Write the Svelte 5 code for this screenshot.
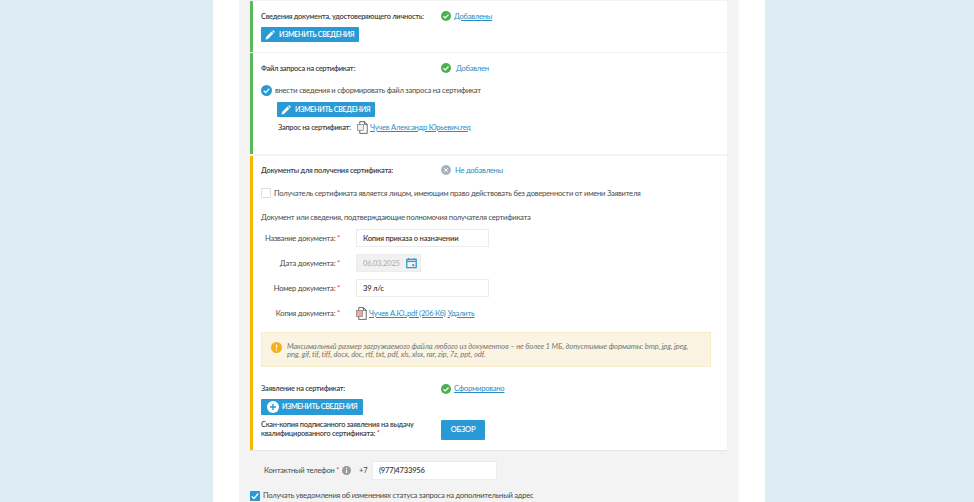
<script>
	const fields = [
		{ label: 'Название документа:', value: 'Копия приказа о назначении' },
		{ label: 'Номер документа:', value: '39 л/с' }
	];
</script>

{#snippet ok()}
	<svg class="status" viewBox="0 0 20 20"><circle cx="10" cy="10" r="10" fill="#4caf50" /><path d="M5 10.500l3.500 3.500 6.500-7" fill="none" stroke="#fff" stroke-width="2.400" /></svg>
{/snippet}

{#snippet pencil()}
	<svg class="btn-icon" viewBox="0 0 20 20"><path d="M1 19l1.200-5L13 3.200 16.800 7 6 17.800zM14.200 2l1.400-1.200c.5-.4 1-.4 1.400 0l2.200 2.200c.4.4.4 1 0 1.400L18 5.800z" fill="#fff" /></svg>
{/snippet}

{#snippet filedoc(color)}
	<svg class="file" viewBox="0 0 14 16">
		<path d="M3.500 .5h6l3.500 3.500v11.500h-9.500z" fill="#fff" stroke="#444" />
		<path d="M9.500 .5v3.500h3.500" fill="none" stroke="#444" />
		<rect x=".5" y="4" width="8" height="8" fill={color} stroke="#777" stroke-width=".8" />
	</svg>
{/snippet}

<div class="page">
	<div class="sheet">
		<div class="panel">
			<section class="card green first">
				<div class="row">
					<b class="title">Сведения документа, удостоверяющего личность:</b>
					<span class="state">{@render ok()}<a href="#a">Добавлены</a></span>
				</div>
				<button class="btn">{@render pencil()}ИЗМЕНИТЬ СВЕДЕНИЯ</button>
			</section>

			<section class="card green second">
				<div class="row">
					<b class="title">Файл запроса на сертификат:</b>
					<span class="state">{@render ok()}<span class="plain added">Добавлен</span></span>
				</div>
				<div class="option">
					<svg class="round" viewBox="0 0 20 20"><circle cx="10" cy="10" r="10" fill="#2a9ad6" /><path d="M5 10.500l3.500 3.500 6.500-7.500" fill="none" stroke="#fff" stroke-width="2.200" /></svg>
					<span>внести сведения и сформировать файл запроса на сертификат</span>
				</div>
				<div class="nested">
					<button class="btn">{@render pencil()}ИЗМЕНИТЬ СВЕДЕНИЯ</button>
					<div class="request">
						<b>Запрос на сертификат:</b>
						{@render filedoc('#eee')}
						<a href="#a">Чучев Александр Юрьевич.req</a>
					</div>
				</div>
			</section>

			<section class="card yellow">
				<div class="row">
					<b class="title">Документы для получения сертификата:</b>
					<span class="state">
						<svg class="status" viewBox="0 0 20 20"><circle cx="10" cy="10" r="10" fill="#a9b4ba" /><path d="M6.500 6.500l7 7m0-7l-7 7" stroke="#fff" stroke-width="2" /></svg>
						<span class="plain">Не добавлены</span>
					</span>
				</div>
				<div class="option unchecked">
					<span class="box"></span>
					<span>Получатель сертификата является лицом, имеющим право действовать без доверенности от имени Заявителя</span>
				</div>
				<p class="caption">Документ или сведения, подтверждающие полномочия получателя сертификата</p>

				<div class="form">
					<label>{fields[0].label} <i>*</i></label>
					<div class="input">{fields[0].value}</div>
					<label>Дата документа: <i>*</i></label>
					<div class="input date">
						<span>06.03.2025</span>
						<svg class="cal" viewBox="0 0 14 14"><path d="M1 2.500h12v10.500H1zM1 5h12" fill="none" stroke="#2a9ad6" stroke-width="1.600" /><path d="M3.500 .5v2m7-2v2" stroke="#2a9ad6" stroke-width="1.500" /><rect x="8" y="8.500" width="2.500" height="2.500" fill="#2a9ad6" /></svg>
					</div>
					<label>{fields[1].label} <i>*</i></label>
					<div class="input">{fields[1].value}</div>
					<label>Копия документа: <i>*</i></label>
					<div class="copy">
						{@render filedoc('#f2a9a0')}
						<a href="#a">Чучев А.Ю..pdf (206 Кб)</a>
						<a href="#a">Удалить</a>
					</div>
				</div>

				<div class="notice">
					<svg class="warn" viewBox="0 0 20 20"><circle cx="10" cy="10" r="10" fill="#f5b11a" /><path d="M10 4.500v7" stroke="#fff" stroke-width="2.200" /><circle cx="10" cy="14.500" r="1.300" fill="#fff" /></svg>
					<em>Максимальный размер загружаемого файла любого из документов – не более 1 МБ, допустимые форматы: bmp, jpg, jpeg, png, gif, tif, tiff, docx, doc, rtf, txt, pdf, xls, xlsx, rar, zip, 7z, ppt, odf.</em>
				</div>

				<div class="row statement">
					<b class="title">Заявление на сертификат:</b>
					<span class="state">{@render ok()}<a href="#a">Сформировано</a></span>
				</div>
				<button class="btn plus">
					<svg class="plus-icon" viewBox="0 0 20 20"><circle cx="10" cy="10" r="10" fill="#fff" /><path d="M10 5v10M5 10h10" stroke="#2a9ad6" stroke-width="2.400" /></svg>
					ИЗМЕНИТЬ СВЕДЕНИЯ
				</button>
				<div class="row scan">
					<b class="title">Скан-копия подписанного заявления на выдачу квалифицированного сертификата: <i>*</i></b>
					<button class="browse">ОБЗОР</button>
				</div>
			</section>

			<div class="phone">
				<span class="phone-label">Контактный телефон <i>*</i></span>
				<svg class="info" viewBox="0 0 20 20"><circle cx="10" cy="10" r="10" fill="#9b9b9b" /><path d="M10 9v6.500" stroke="#fff" stroke-width="2.400" /><circle cx="10" cy="5.500" r="1.500" fill="#fff" /></svg>
				<span class="prefix">+7</span>
				<div class="input tel">(977)4733956</div>
			</div>
			<div class="notify">
				<span class="tick"><svg viewBox="0 0 14 14"><path d="M2.500 7.500l3 3 6-7" fill="none" stroke="#fff" stroke-width="1.800" /></svg></span>
				<span>Получать уведомления об изменениях статуса запроса на дополнительный адрес</span>
			</div>
		</div>
	</div>
</div>

<style>
	:global(body) {
		margin: 0;
		background: #deecf4;
	}

	.page {
		width: 974px;
		height: 502px;
		overflow: hidden;
		font-family: Lato, Roboto, sans-serif;
		font-size: 7.600px;
		letter-spacing: -.24px;
		line-height: 11px;
		color: #4a4a4a;
	}

	.sheet {
		box-sizing: border-box;
		width: 552px;
		height: 502px;
		margin-left: 213px;
		padding: 0 26px;
		background: #fff;
	}

	.panel {
		box-sizing: border-box;
		height: 502px;
		padding: 1px 10px 0 11px;
		background: #f3f3f3;
		border-right: 2px solid #f8f8f8;
	}

	.card {
		box-sizing: border-box;
		padding-left: 8px;
		padding-right: 16px;
		background: #fff;
		border-left: 3px solid;
	}

	.green {
		border-color: #5cb85c;
	}

	.yellow {
		border-color: #f5b800;
		height: 294px;
		padding-top: 8.500px;
		box-shadow: 0 1px 1px #e8e8e8;
	}

	.first {
		height: 51px;
		margin-bottom: 1px;
		padding-top: 9.500px;
	}

	.second {
		height: 101px;
		margin-bottom: 2px;
		padding-top: 9.500px;
	}

	.row {
		display: flex;
		align-items: center;
	}

	.title {
		width: 180px;
		flex: none;
		font-size: 7.400px;
		letter-spacing: -.25px;
		font-weight: 600;
		color: #404040;
		white-space: nowrap;
	}

	.state {
		display: flex;
		align-items: center;
		gap: 3px;
	}

	.status {
		width: 10px;
		height: 10px;
	}

	a {
		color: #2a8cc4;
		text-decoration: underline;
		white-space: nowrap;
	}

	.plain {
		color: #2a8cc4;
		margin-left: 1px;
	}

	.added {
		margin-left: 2px;
	}

	.btn {
		display: flex;
		align-items: center;
		gap: 4px;
		width: 98px;
		height: 15px;
		margin: 5.500px 0 0;
		padding: 0 4px;
		border: none;
		border-radius: 1px;
		background: #2a9ad6;
		color: #fff;
		font: 600 7.200px Lato, Roboto, sans-serif;
		letter-spacing: -.36px;
		white-space: nowrap;
	}

	.btn-icon {
		flex: none;
		width: 10px;
		height: 10px;
	}

	.option {
		display: flex;
		align-items: center;
		gap: 3px;
		margin-top: 11px;
		white-space: nowrap;
	}

	.round {
		width: 11px;
		height: 11px;
	}

	.unchecked {
		margin-top: 12px;
	}

	.nested {
		margin-left: 16px;
	}

	.nested .btn {
		margin-top: 6.500px;
	}

	.request {
		display: flex;
		align-items: center;
		gap: 2.500px;
		margin-top: 3.500px;
		padding-left: 1px;
		white-space: nowrap;
	}

	.request b {
		width: 76px;
		font-size: 7.400px;
		letter-spacing: -.25px;
		font-weight: 600;
		color: #404040;
	}

	.file {
		flex: none;
		width: 11px;
		height: 13px;
	}

	.box {
		box-sizing: border-box;
		width: 10px;
		height: 10px;
		background: #fff;
		border: 1px solid #ddd;
		border-radius: 1px;
	}

	.caption {
		margin: 13px 0 0;
	}

	.form {
		display: grid;
		grid-template-columns: 79px 133px;
		column-gap: 16px;
		row-gap: 7px;
		align-items: center;
		margin-top: 6.500px;
	}

	label {
		text-align: right;
		white-space: nowrap;
	}

	i {
		color: #e8442a;
		font-style: normal;
	}

	.input {
		box-sizing: border-box;
		height: 18px;
		padding-left: 6px;
		line-height: 17px;
		background: #fff;
		border: 1px solid #ececec;
		font-weight: 600;
		letter-spacing: -.2px;
		color: #404040;
	}

	.date {
		width: 65px;
		display: flex;
		align-items: center;
		justify-content: space-between;
		padding-right: 3px;
		background: #f1f1f1;
		color: #aaa;
		font-weight: 400;
	}

	.cal {
		width: 11px;
		height: 12px;
	}

	.copy {
		display: flex;
		align-items: center;
		gap: 2px;
		height: 18px;
	}

	.notice {
		display: flex;
		align-items: flex-start;
		gap: 5px;
		height: 35px;
		box-sizing: border-box;
		margin-top: 10px;
		padding: 8.500px 20px 0 9px;
		background: #fbf4e2;
		border: 1px solid #f6ecc8;
		color: #777;
		line-height: 8.500px;
		letter-spacing: -.12px;
	}

	.warn {
		flex: none;
		width: 11px;
		height: 11px;
	}

	em {
		display: block;
	}

	.statement {
		margin-top: 16px;
	}

	.btn.plus {
		width: 102px;
		gap: 3px;
		height: 16px;
		margin-top: 4.500px;
		padding: 0 6px;
	}

	.plus-icon {
		flex: none;
		width: 12px;
		height: 12px;
	}

	.scan {
		margin-top: 5px;
		height: 20px;
	}

	.scan .title {
		line-height: 8.500px;
		white-space: normal;
	}

	.browse {
		width: 44px;
		height: 20px;
		padding: 0;
		border: none;
		border-radius: 1px;
		background: #2a9ad6;
		color: #fff;
		font: 600 7.500px Lato, Roboto, sans-serif;
		letter-spacing: -.2px;
	}

	.phone {
		display: flex;
		align-items: center;
		margin-top: 11px;
		padding-left: 14px;
	}

	.phone-label {
		width: 78px;
		white-space: nowrap;
	}

	.info {
		width: 9px;
		height: 9px;
	}

	.prefix {
		width: 21px;
		padding-left: 8px;
		box-sizing: border-box;
	}

	.tel {
		width: 125px;
		height: 19px;
	}

	.notify {
		display: flex;
		align-items: center;
		gap: 3px;
		margin-top: 10px;
		white-space: nowrap;
	}

	.tick {
		display: flex;
		width: 10px;
		height: 10px;
		background: #2a9ad6;
		border-radius: 1px;
	}
</style>
